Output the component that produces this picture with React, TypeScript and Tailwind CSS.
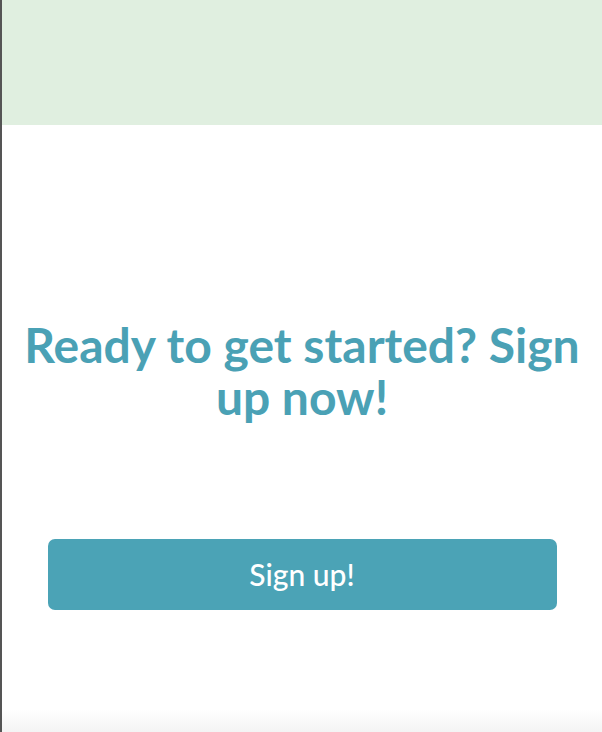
const App = () => {
  return (
    <div className="min-h-[732px] flex flex-col bg-white border-l-2 border-[#555555] font-['Lato','Liberation_Sans',sans-serif]">
      {/* Header band */}
      <div className="h-[125px] bg-[#e0efe0]" />

      {/* Call to action */}
      <div className="flex-1 flex flex-col items-center pt-[194px] px-4">
        <h1 className="text-[48px] leading-[52px] font-bold text-[#4aa1b5] text-center">
          Ready to get started? Sign up now!
        </h1>
        <button className="mt-[116px] w-[509px] h-[71px] rounded-[7px] bg-[#4ba3b6] text-white text-[30px] font-medium">
          Sign up!
        </button>
      </div>

      {/* Bottom fade */}
      <div className="h-[22px] bg-gradient-to-b from-white to-[#f4f4f4]" />
    </div>
  )
}

export default App
